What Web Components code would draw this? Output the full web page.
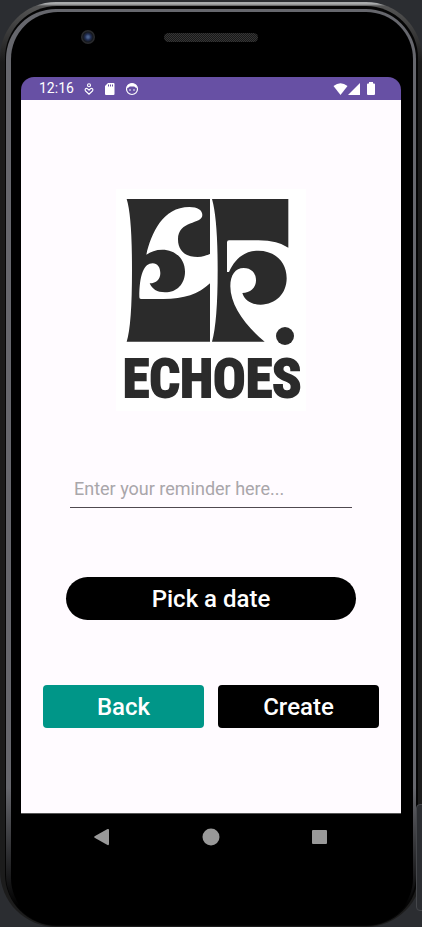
<!DOCTYPE html>
<html lang="en">
<head>
<meta charset="utf-8">
<meta name="viewport" content="width=device-width, initial-scale=1">
<title>Echoes</title>
<style>
html, body { margin: 0; height: 100%; background: #2b2d31; font-family: Roboto, sans-serif; }
body { overflow: hidden; }
</style>
</head>
<body>
<phone-frame>
  <status-bar slot="screen" time="12:16"></status-bar>
  <reminder-form slot="screen"><echoes-logo></echoes-logo></reminder-form>
  <nav-bar slot="screen"></nav-bar>
</phone-frame>
<script>
function define(name, markup, setup) {
  const template = document.createElement('template');
  template.innerHTML = markup;
  customElements.define(name, class extends HTMLElement {
    constructor() {
      super();
      this.attachShadow({ mode: 'open' }).append(template.content.cloneNode(true));
    }
    connectedCallback() { if (setup) setup(this); }
  });
}

define('echoes-logo', `
<style>
:host { display: block; width: 190px; }
svg { display: block; width: 100%; height: auto; }
text { font: 700 54px "Liberation Sans Narrow", "Roboto Condensed", "Liberation Sans", sans-serif; }
</style>
<svg viewBox="0 0 570 666" role="img" aria-label="Echoes">
  <rect width="570" height="666" fill="#fff"/>
  <g transform="translate(-18 -12)" fill="#2b2b2b">
    <path d="M50 42H300V470H50Q66 420 66 256T50 42Z"/>
    <path d="M306 42H535V188Q505 167 445 166H357Q351 166 351 172V261L357 261C375 220 405 197 445 197C496 197 530 232 530 280C530 326 497 359 452 359C424 359 404 346 397 324C420 324 438 309 438 286C438 263 423 249 401 249C376 249 361 270 361 304C361 360 405 422 464 470H306Q323 410 323 256T306 42Z"/>
    <path fill="#fff" d="M109 209C124 145 158 66 238 66C263 66 277 75 277 90C277 119 204 105 204 163C204 198 226 216 263 216C278 216 291 211 301 206V294C266 327 222 342 160 342H93Q88 342 88 337C88 269 102 235 128 235C142 235 151 247 151 264C151 283 139 295 119 295C126 312 141 322 165 322C201 322 225 296 225 260C225 222 196 194 157 194C137 194 122 200 109 209Z"/>
    <circle cx="525" cy="453" r="27"/>
    <g transform="scale(3)" stroke="#2b2b2b" stroke-width="2"><text x="102" y="212" text-anchor="middle">ECHOES</text></g>
  </g>
</svg>`);

define('status-bar', `
<style>
:host { display: flex; align-items: center; gap: 9px; height: 23px; padding: 0 25px 0 18px; background: #6750a4; color: #fff; font-size: 14px; line-height: 23px; }
svg { display: block; fill: currentColor; }
.right { display: flex; align-items: center; margin-left: auto; }
.battery { margin-left: 6px; }
</style>
<time></time>
<svg width="12" height="12" viewBox="0 0 12 12"><g fill="none" stroke="currentColor" stroke-width="1.1"><circle cx="6" cy="2.300" r="1.500"/><path d="M6 7.200L4.600 5.800Q3.400 4.900 2.400 5.900Q1.600 7 2.600 8L6 11.200L9.400 8Q10.400 7 9.600 5.900Q8.600 4.900 7.400 5.800Z"/></g></svg>
<svg width="12" height="14" viewBox="0 0 12 14"><path fill-rule="evenodd" d="M4 1H9.500Q10.500 1 10.500 2V12Q10.500 13 9.500 13H2Q1 13 1 12V4ZM4 2.500V4.500H5V2.500ZM6 2.500V4.500H7V2.500ZM8 2.500V4.500H9V2.500Z"/></svg>
<svg width="14" height="14" viewBox="0 0 14 14"><circle cx="7" cy="7" r="5.500" fill="none" stroke="currentColor" stroke-width="1.200"/><path d="M2 6C2 0 12 0 12 6C10 6 10 4.500 9 4.500H5C4 4.500 4 6 2 6Z"/><circle cx="5" cy="8" r=".8"/><circle cx="9" cy="8" r=".8"/></svg>
<div class="right">
<svg width="15" height="12" viewBox="0 0 15 12"><path d="M0.500 3Q7.500-2.500 14.500 3L7.500 12Z"/></svg>
<svg width="12" height="12" viewBox="0 0 12 12"><path d="M12 0V12H0Z"/></svg>
<svg class="battery" width="10" height="13" viewBox="0 0 10 13"><path d="M3 0H7V1.500H8Q9 1.500 9 2.500V12Q9 13 8 13H2Q1 13 1 12V2.500Q1 1.500 2 1.500H3Z"/></svg>
</div>`, el => { el.shadowRoot.querySelector('time').textContent = el.getAttribute('time'); });

define('app-button', `
<style>
:host { display: block; }
button { display: block; width: 100%; height: 43px; padding: 0; border: 0; border-radius: var(--radius, 4px); background: var(--fill, #000); color: #fff; font: 500 24px/44px Roboto, sans-serif; text-align: center; }
</style>
<button type="button"><slot></slot></button>`);

define('reminder-form', `
<style>
:host { display: block; flex: 1; background: #fffbff; }
form { display: flex; flex-direction: column; padding: 89px 22px 0; }
::slotted(echoes-logo) { align-self: center; }
input { height: 38px; margin: 58px 27px 0; padding: 0 4px; border: 0; border-bottom: 1px solid #504950; border-radius: 0; outline: 0; background: transparent; color: #1c1b1f; font: 400 18px/24px Roboto, sans-serif; }
input::placeholder { color: #a9a6aa; opacity: 1; }
.date { margin: 69px 23px 0; --radius: 22px; }
.row { display: grid; grid-template-columns: 1fr 1fr; gap: 14px; margin-top: 65px; }
.back { --fill: #009688; }
</style>
<form>
  <slot></slot>
  <input type="text" aria-label="Reminder" placeholder="Enter your reminder here...">
  <app-button class="date">Pick a date</app-button>
  <div class="row"><app-button class="back">Back</app-button><app-button>Create</app-button></div>
</form>`);

define('nav-bar', `
<style>
:host { display: flex; justify-content: space-between; height: 47px; padding: 0 69px; border-top: 1px solid #555; background: #000; box-sizing: border-box; }
button { display: grid; place-items: center; width: 24px; height: 46px; padding: 0; border: 0; background: none; color: #999; }
svg { width: 20px; height: 20px; fill: currentColor; }
</style>
<button type="button" aria-label="Back"><svg viewBox="0 0 20 20"><path d="M2.600 9.300L15.500 2Q17 1.500 17 3V17Q17 18.500 15.500 18L2.600 10.700Q1.500 10 2.600 9.300Z"/></svg></button>
<button type="button" aria-label="Home"><svg viewBox="0 0 20 20"><circle cx="10" cy="10" r="8.500"/></svg></button>
<button type="button" aria-label="Overview"><svg viewBox="0 0 20 20"><rect x="2" y="3" width="15" height="14" rx="1"/></svg></button>`);

define('phone-frame', `
<style>
:host { display: block; height: 100vh; box-sizing: border-box; padding: 2px 0 0; position: relative; }
.rim { height: 100%; box-sizing: border-box; padding: 4px 4px 1px 5px; border-radius: 56px; background: linear-gradient(#a9abac 0 2px, #555 4px, #1c1c1c 60px); }
.groove { height: 100%; box-sizing: border-box; padding: 3px 2px 1px 1px; border-radius: 52px; background: #050505; }
.bevel { height: 100%; box-sizing: border-box; padding: 3px 3px 0 5px; border-radius: 50px; background: linear-gradient(#66676d 0, #66676d 85%, #000 98%); }
.body { display: flex; flex-direction: column; height: 100%; box-sizing: border-box; padding: 0 12px 65px 10px; border-radius: 47px; background: #000; }
.top { display: grid; grid-template-columns: 1fr 94px 1fr; align-items: center; height: 50px; margin-bottom: 15px; flex: none; }
.camera { width: 14px; height: 14px; margin-left: 60px; border-radius: 50%; background: radial-gradient(circle, #49608c 0 1px, #202c50 3px, #15181d 5px, #292a2d 6px); }
.speaker { height: 9px; border-radius: 5px; background: repeating-conic-gradient(#353535 0 25%, #181818 0 50%) 0 0 / 2px 2px; }
.screen { display: flex; flex: 1; flex-direction: column; overflow: hidden; border-radius: 13px 13px 0 0; }
.tab { position: absolute; right: -4px; bottom: 16px; width: 10px; height: 107px; box-sizing: border-box; border: 1px solid #45474b; border-radius: 4px; background: #2b2d31; }
</style>
<div class="rim"><div class="groove"><div class="bevel"><div class="body">
  <div class="top"><span class="camera"></span><span class="speaker"></span></div>
  <div class="screen"><slot name="screen"></slot></div>
</div></div></div></div>
<div class="tab"></div>`);
</script>
</body>
</html>
